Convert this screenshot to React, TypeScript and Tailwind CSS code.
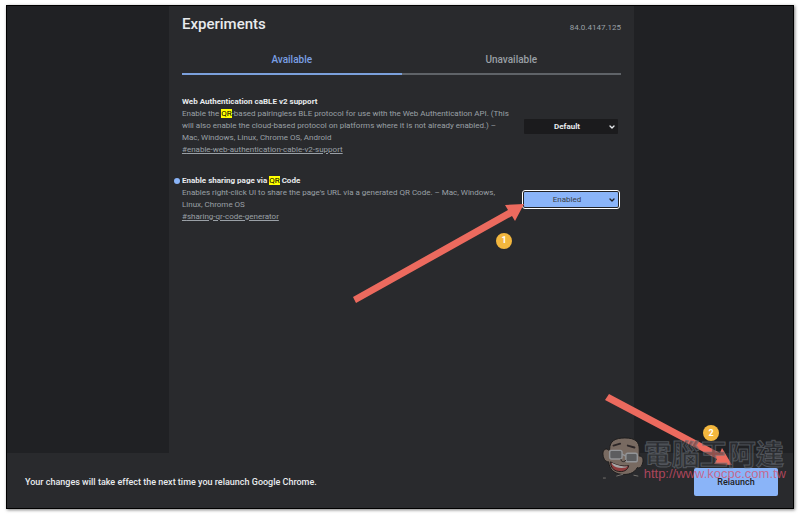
import React, { useState } from 'react';
import { ChevronDown } from 'lucide-react';
import clsx from 'clsx';

interface Experiment {
  id: string;
  title: React.ReactNode;
  description: React.ReactNode;
  initial: string;
  label: string;
}

const options = ['Default', 'Enabled', 'Disabled'];

function Mark({ children }: { children: React.ReactNode }) {
  return <mark className="bg-[#ffff00] font-normal text-black">{children}</mark>;
}

const experiments: Experiment[] = [
  {
    id: 'enable-web-authentication-cable-v2-support',
    label: 'Web Authentication caBLE v2 support',
    title: 'Web Authentication caBLE v2 support',
    description: (
      <>
        Enable the <Mark>QR</Mark>-based pairingless BLE protocol for use with the Web Authentication API. (This
        will also enable the cloud-based protocol on platforms where it is not already enabled.) –
        Mac, Windows, Linux, Chrome OS, Android
      </>
    ),
    initial: 'Default',
  },
  {
    id: 'sharing-qr-code-generator',
    label: 'Enable sharing page via QR Code',
    title: (
      <>
        Enable sharing page via <Mark>QR</Mark> Code
      </>
    ),
    description: (
      <>
        Enables right-click UI to share the page's URL via a generated QR Code. – Mac, Windows,
        Linux, Chrome OS
      </>
    ),
    initial: 'Enabled',
  },
];

function StepBadge({ children, className }: { children: React.ReactNode; className: string }) {
  return (
    <span
      className={clsx(
        'absolute flex size-4 items-center justify-center rounded-full bg-[#f3b73e] text-[9px] leading-none font-bold text-white',
        className
      )}
    >
      {children}
    </span>
  );
}

function ExperimentRow({ item }: { item: Experiment }) {
  const [value, setValue] = useState(item.initial);
  const changed = value !== 'Default';

  return (
    <section className="flex items-center justify-between">
      <div className="relative w-[330px] min-w-0 text-[8px] leading-3">
        {changed && <span className="absolute top-[3px] -left-2 size-1.5 rounded-full bg-[#8ab4f8]" />}
        <h3 className="font-bold text-[#e8eaed]">{item.title}</h3>
        <p className="text-[#9aa0a6]">{item.description}</p>
        <a href={`#${item.id}`} className="block text-[#9aa0a6] underline">
          #{item.id}
        </a>
      </div>
      <div className="relative mr-[3px] w-[94px] shrink-0">
        <select
          aria-label={item.label}
          value={value}
          onChange={(e) => setValue(e.target.value)}
          className={clsx(
            'block h-[15px] w-full appearance-none rounded-[1px] pr-2 text-center text-[8px] leading-[15px] outline-none',
            changed
              ? 'bg-[#8ab4f8] text-[#3c4043] ring-1 ring-[#202124] outline-1 outline-offset-1 outline-white outline-solid'
              : 'bg-[#1b1b1d] font-bold text-[#e8eaed]'
          )}
        >
          {options.map((o) => (
            <option key={o}>{o}</option>
          ))}
        </select>
        <ChevronDown
          strokeWidth={4}
          className={clsx(
            'pointer-events-none absolute top-1 right-0.5 size-2',
            changed ? 'text-[#202124]' : 'text-[#e8eaed]'
          )}
        />
        {changed && (
          <>
            <svg
              className="pointer-events-none absolute top-[7px] right-[94px] h-[104px] w-[172px]"
              viewBox="0 0 172 104"
              fill="#ec6a5e"
              aria-hidden="true"
            >
              <path d="M172 5 L153 6 L156 11 L1 98 L4 104 L160 17 L163 22 Z" />
            </svg>
            <StepBadge className="top-[41px] -left-7">1</StepBadge>
          </>
        )}
      </div>
    </section>
  );
}

function Mascot() {
  return (
    <svg className="h-[46px] w-[42px] shrink-0" viewBox="0 0 44 46" fill="none" aria-hidden="true">
      <path d="M8 14 C8 5 14 2 24 2 C35 2 39 6 39 14 L39 21 C43 21 44 25 42 30 C41 33 39 34 37 33 C34 39 27 41 20 40 C12 39 8 35 7 27 C3 27 1 23 1 18 C1 14 5 12 7 15 Z" fill="#786a61" stroke="#1d1c1c" strokeWidth="1" />
      <path d="M12 10 L19 8 M27 10 L34 12" stroke="#2d2728" strokeWidth="2" strokeLinecap="round" />
      <rect x="8" y="15" width="13" height="9" rx="2" fill="#5c5d5f" stroke="#929497" strokeWidth="1.5" />
      <rect x="25" y="18" width="12" height="9" rx="2" fill="#5c5d5f" stroke="#929497" strokeWidth="1.5" />
      <path d="M21 19 L25 21" stroke="#929497" strokeWidth="1.5" />
      <path d="M20 24 C19 27 24 28 25 25" stroke="#2b2626" strokeWidth="1" />
      <path d="M9 27 C15 31 22 32 28 31 C27 36 22 38 17 37 C12 36 9 33 9 27 Z" fill="#8f3b3c" stroke="#241c1c" strokeWidth="1" />
      <path d="M10 28 C16 31 22 32 27 32 L25 33 C19 34 14 33 11 30 Z" fill="#a6a6a6" />
      <path d="M1 44 L4 44 M15 42 L22 40 M33 41 L38 42" stroke="#77736f" strokeWidth="1" />
    </svg>
  );
}

function Watermark() {
  return (
    <div className="pointer-events-none absolute -top-[18px] right-[7px] flex whitespace-nowrap">
      <Mascot />
      <div className="mt-1">
        <div className="font-['Noto_Sans_CJK_TC',sans-serif] text-[28px] leading-7 font-bold text-[#35383c]/50 [-webkit-text-stroke:1px_rgba(116,122,130,0.55)]">
          電腦王阿達
        </div>
        <div className="font-['Liberation_Sans',sans-serif] text-[13px] leading-[14px] text-[#d8506c]/75">
          http://www.kocpc.com.tw
        </div>
      </div>
    </div>
  );
}

export default function App() {
  const [tab, setTab] = useState('Available');

  return (
    <div className="flex h-screen flex-col bg-white pt-[5px] pr-[6px] pb-[6px] pl-[6px] font-[Roboto,sans-serif]">
      <div className="flex min-h-0 flex-1 flex-col border border-black bg-[#202124] shadow-[1px_1px_3px_rgba(0,0,0,0.5)]">
        <div className="flex min-h-0 flex-1 justify-center pl-[3px]">
          <main className="w-[59.4%] bg-[#292a2d] px-[13px]">
            <header className="flex items-center justify-between pt-2">
              <h1 className="text-[15px] leading-5 font-medium text-[#e8eaed]">Experiments</h1>
              <span className="pt-2 text-[8px] leading-3 text-[#9aa0a6]">84.0.4147.125</span>
            </header>

            <div role="tablist" className="mt-2 grid grid-cols-2">
              {['Available', 'Unavailable'].map((name) => (
                <button
                  key={name}
                  role="tab"
                  aria-selected={tab === name}
                  onClick={() => setTab(name)}
                  className={clsx(
                    'h-[33px] border-b-2 pt-1 text-[10px] leading-4 font-medium',
                    tab === name ? 'border-[#7ba0dc] text-[#7ba0e6]' : 'border-[#5f6368] text-[#9aa0a6]'
                  )}
                >
                  {name}
                </button>
              ))}
            </div>

            <div className="mt-[21px] flex flex-col gap-[19px]">
              {experiments.map((item) => (
                <ExperimentRow key={item.id} item={item} />
              ))}
            </div>
          </main>
        </div>

        <footer className="relative flex h-[55px] shrink-0 items-center justify-between bg-[#292a2d] pt-0.5 pr-[15px] pl-[18px]">
          <p className="text-[9px] leading-4 font-medium text-[#e8eaed]">
            Your changes will take effect the next time you relaunch Google Chrome.
          </p>
          <button className="h-7 w-[84px] rounded-[2px] bg-[#8ab4f8] pt-0.5 text-[9px] font-medium text-[#202124]">
            Relaunch
          </button>
          <StepBadge className="-top-7 right-[74px]">2</StepBadge>
          <svg
            className="pointer-events-none absolute -top-[59px] right-[60px] h-[72px] w-[128px]"
            viewBox="0 0 128 72"
            fill="#ec6a5e"
            aria-hidden="true"
          >
            <path d="M4 0 L0 6 L112 65 L109 70 L127 71 L117 54 L115 59 Z" />
          </svg>
          <Watermark />
        </footer>
      </div>
    </div>
  );
}
